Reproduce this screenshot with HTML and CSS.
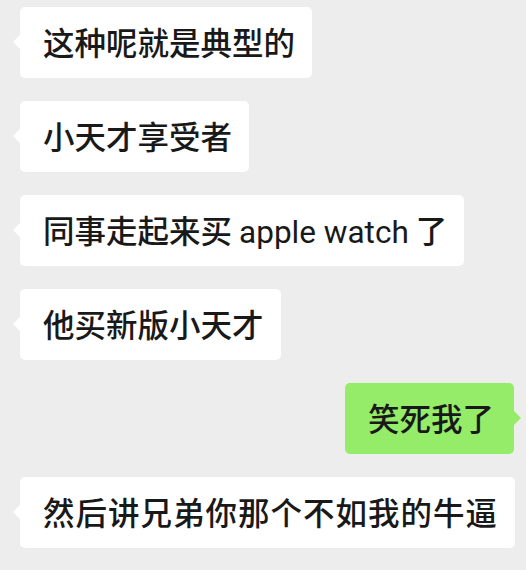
FILE: index.html
```html
<!DOCTYPE html>
<html>
  <head>
    <meta charset="utf-8" />
    <title>聊天记录</title>
    <link rel="stylesheet" href="styles.css">
  </head>
  <body>
    <div class="chat">
      <div class="row left"><div class="bubble">这种呢就是典型的</div></div>
      <div class="row left"><div class="bubble">小天才享受者</div></div>
      <div class="row left"><div class="bubble">同事走起来买 <span class="latin">apple watch</span> 了</div></div>
      <div class="row left"><div class="bubble">他买新版小天才</div></div>
      <div class="row right"><div class="bubble mine">笑死我了</div></div>
      <div class="row left"><div class="bubble spaced">然后讲兄弟你那个不如我的牛逼</div></div>
    </div>
  </body>
</html>
```

FILE: styles.css
```css
html, body {
  margin: 0;
  padding: 0;
  background: #ededed;
}
body {
  font-family: "Noto Sans CJK SC", "Noto Sans", sans-serif;
  color: #191919;
}
.chat {
  display: flex;
  flex-direction: column;
  gap: 23px;
  padding: 7px 12px 0 20px;
}
.row {
  display: flex;
}
.row.right {
  justify-content: flex-end;
}
.bubble {
  position: relative;
  box-sizing: border-box;
  height: 71px;
  background: #ffffff;
  border-radius: 5px;
  font-size: 31.5px;
  font-weight: 500;
  line-height: 41px;
  padding: 14px 17px 16px 23px;
  white-space: nowrap;
}
.bubble.spaced {
  letter-spacing: 1px;
}
.latin {
  font-family: Roboto, "Noto Sans", sans-serif;
  font-weight: 400;
  line-height: 1;
}
.bubble::before {
  content: "";
  position: absolute;
  top: 50%;
  left: -7px;
  margin-top: -8px;
  border-style: solid;
  border-width: 7px 7px 7px 0;
  border-color: transparent #ffffff transparent transparent;
}
.bubble.mine {
  background: #95ec69;
  padding-right: 20px;
}
.bubble.mine::before {
  left: auto;
  right: -7px;
  border-width: 7px 0 7px 7px;
  border-color: transparent transparent transparent #95ec69;
}
```
